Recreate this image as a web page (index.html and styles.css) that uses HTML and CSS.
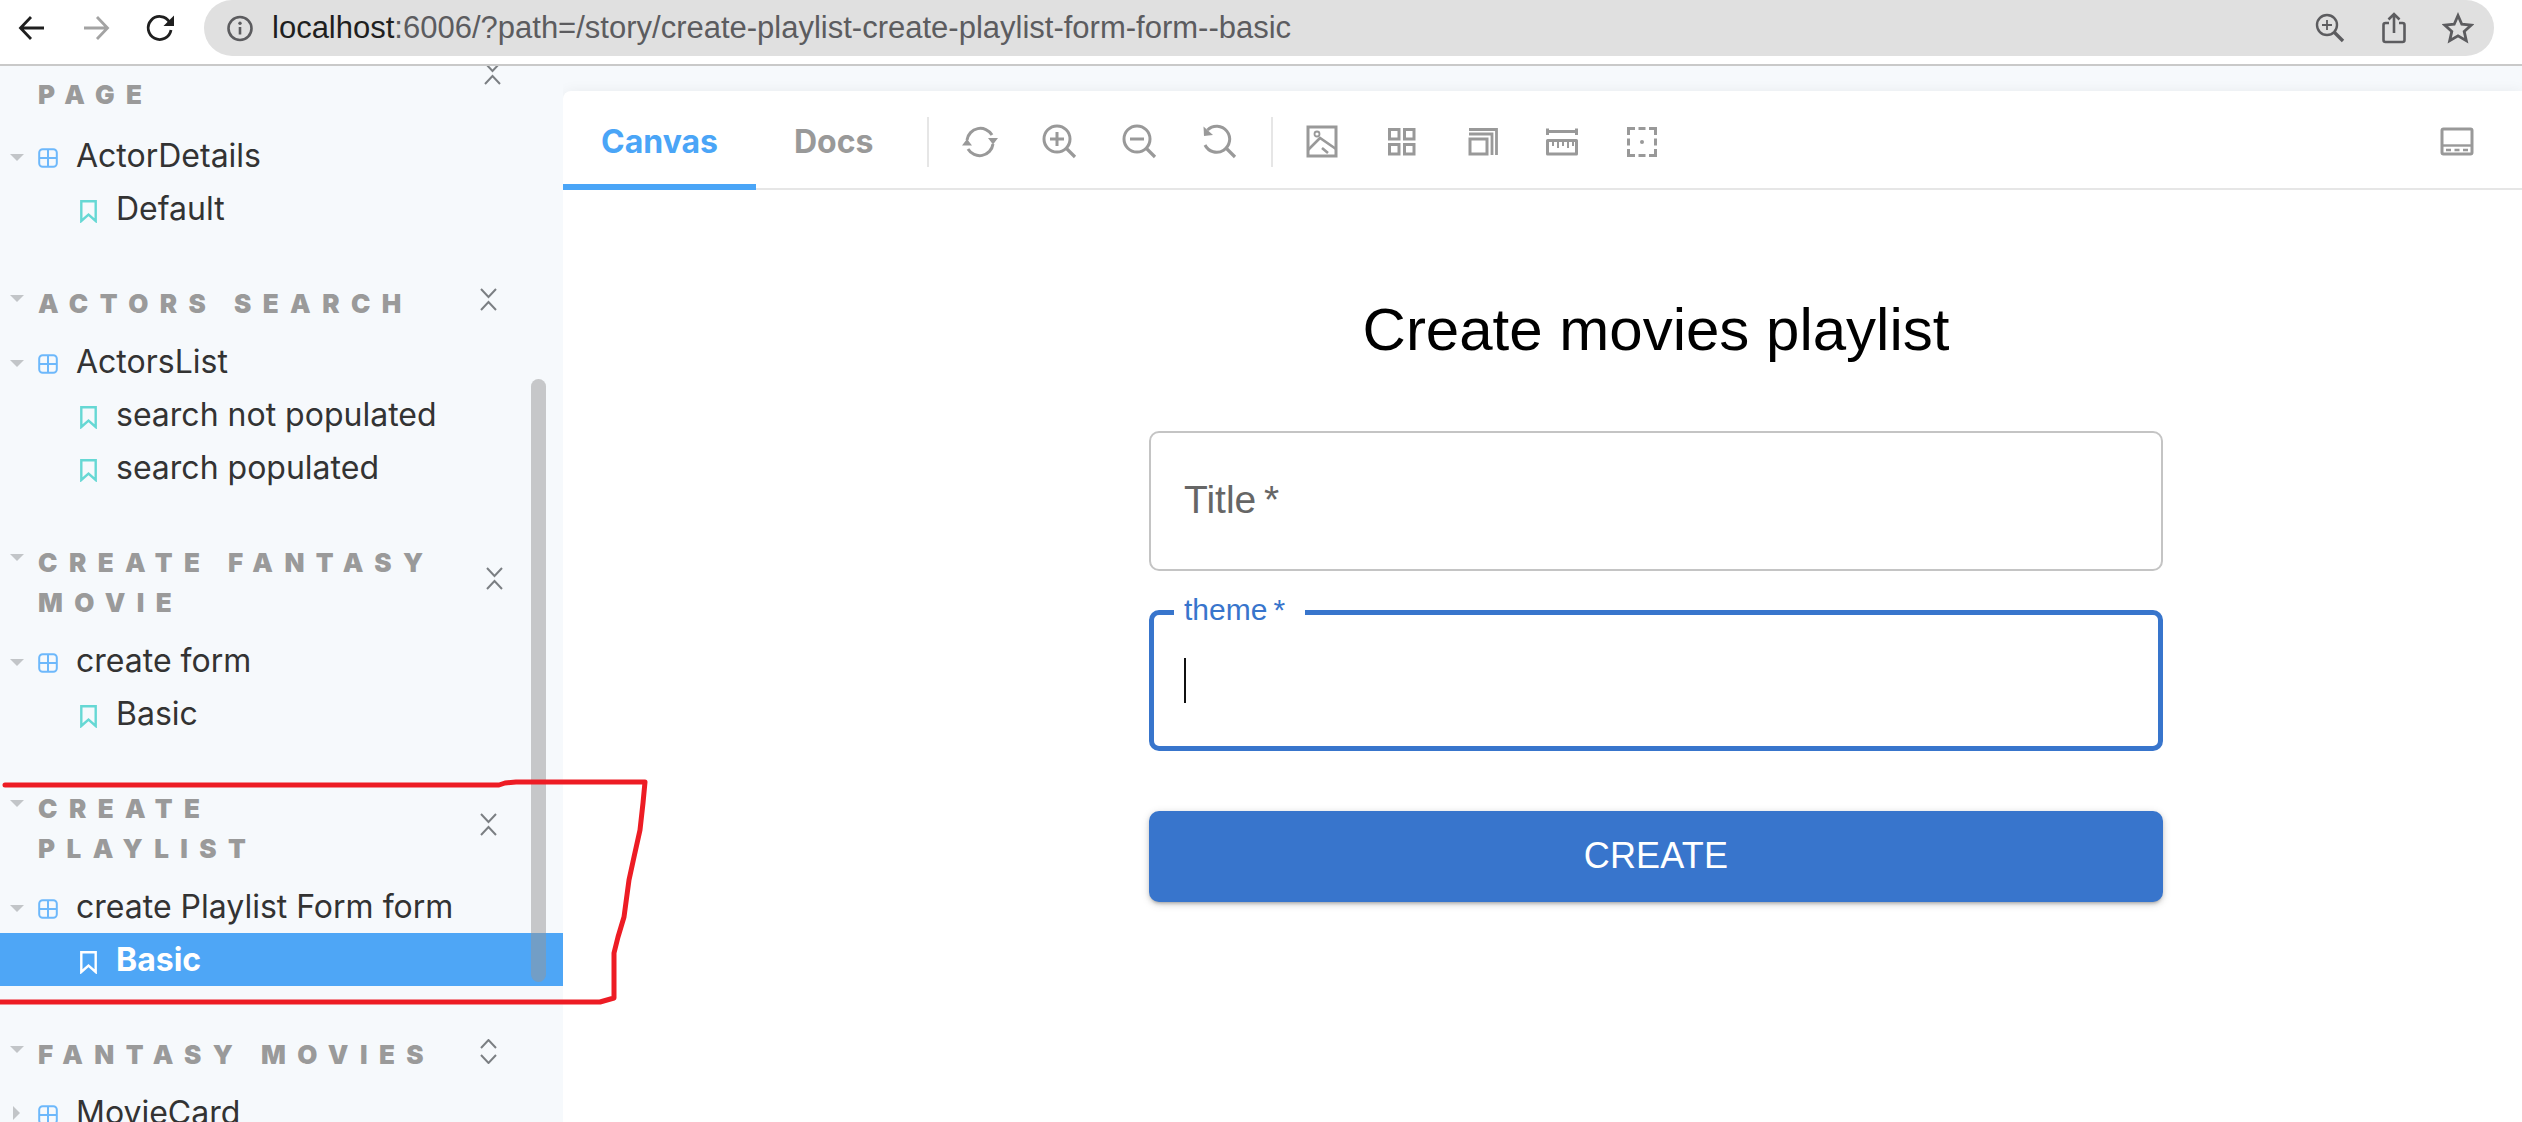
FILE: index.html
```html
<!DOCTYPE html>
<html lang="en">
<head>
<meta charset="utf-8">
<title>Storybook</title>
<link rel="stylesheet" href="styles.css">
</head>
<body>
<svg class="defs" aria-hidden="true">
  <symbol id="comp" viewBox="0 0 20 20"><rect x="1.2" y="1.2" width="17.6" height="17.6" rx="3.5" fill="none" stroke="currentColor" stroke-width="2"/><path d="M10 1.2V18.8M1.2 10H18.8" fill="none" stroke="currentColor" stroke-width="2"/></symbol>
  <symbol id="book" viewBox="0 0 17 23"><path d="M1.3 1.3H15.7V21L8.5 14.5L1.3 21Z" fill="none" stroke="currentColor" stroke-width="2.4"/></symbol>
  <symbol id="collapse" viewBox="0 0 17 23"><path d="M1 1L8.500 9L16 1M1 22L8.500 14L16 22" fill="none" stroke="currentColor" stroke-width="2"/></symbol>
  <symbol id="expand" viewBox="0 0 17 25"><path d="M1 9L8.500 1L16 9M1 16L8.500 24L16 16" fill="none" stroke="currentColor" stroke-width="2"/></symbol>
</svg>
<header class="chrome">
  <div class="nav-btn nav-dark"><svg width="30" height="30" viewBox="0 0 30 30"><path d="M27 15H4M14 4L3.500 15L14 26" fill="none" stroke="currentColor" stroke-width="2.800"/></svg></div>
  <div class="nav-btn nav-off"><svg width="30" height="30" viewBox="0 0 30 30"><path d="M3 15H26M16 4L26.500 15L16 26" fill="none" stroke="currentColor" stroke-width="2.800"/></svg></div>
  <div class="nav-btn nav-dark"><svg width="30" height="30" viewBox="0 0 30 30"><path d="M24.500 9A11.500 11.500 0 1 0 26 17" fill="none" stroke="currentColor" stroke-width="2.800"/><path d="M29 2.500V13H18.500Z" fill="currentColor"/></svg></div>
  <div class="omnibox">
    <svg class="info" width="26" height="27" viewBox="0 0 26 26"><circle cx="13" cy="13" r="11.500" fill="none" stroke="currentColor" stroke-width="2.600"/><path d="M13 11.500V19" stroke="currentColor" stroke-width="2.600"/><circle cx="13" cy="7.800" r="1.700" fill="currentColor"/></svg>
    <div class="url"><span class="host">localhost</span>:6006/?path=/story/create-playlist-create-playlist-form-form--basic</div>
    <div class="omni-btn"><svg width="30" height="30" viewBox="0 0 30 30"><circle cx="12" cy="12" r="10" fill="none" stroke="currentColor" stroke-width="2.400"/><path d="M19.500 19.500L28 28" stroke="currentColor" stroke-width="3.400"/><path d="M12 7V17M7 12H17" stroke="currentColor" stroke-width="1.800"/></svg></div>
    <div class="omni-btn"><svg width="26" height="32" viewBox="0 0 26 32"><path d="M8 11H4.500Q2.500 11 2.500 13V28Q2.500 30 4.500 30H21.500Q23.500 30 23.500 28V13Q23.500 11 21.500 11H18" fill="none" stroke="currentColor" stroke-width="2.600"/><path d="M13 21V2.500M7.500 7.500L13 2L18.500 7.500" fill="none" stroke="currentColor" stroke-width="2.600"/></svg></div>
    <div class="omni-btn"><svg width="32" height="32" viewBox="0 0 32 32"><path d="M16 3.500L19.800 12.200L29.300 13.100L22.200 19.400L24.300 28.700L16 23.800L7.700 28.700L9.800 19.400L2.700 13.100L12.200 12.200Z" fill="none" stroke="currentColor" stroke-width="2.800" stroke-linejoin="miter"/></svg></div>
  </div>
</header>
<div class="app">
  <aside class="sidebar">
    <section class="group group-first">
      <div class="group-head"><span class="caret"></span><h2 class="group-title">Actor Details<br>Page</h2><svg class="tog tog-b"><use href="#collapse"/></svg></div>
      <div class="row"><span class="caret caret-row"></span><svg class="ico-comp"><use href="#comp"/></svg><span>ActorDetails</span></div>
      <div class="row row-story"><svg class="ico-book"><use href="#book"/></svg><span>Default</span></div>
    </section>
    <section class="group">
      <div class="group-head"><span class="caret"></span><h2 class="group-title">Actors Search</h2><svg class="tog"><use href="#collapse"/></svg></div>
      <div class="row"><span class="caret caret-row"></span><svg class="ico-comp"><use href="#comp"/></svg><span>ActorsList</span></div>
      <div class="row row-story"><svg class="ico-book"><use href="#book"/></svg><span>search not populated</span></div>
      <div class="row row-story"><svg class="ico-book"><use href="#book"/></svg><span>search populated</span></div>
    </section>
    <section class="group">
      <div class="group-head"><span class="caret"></span><h2 class="group-title">Create Fantasy<br>Movie</h2><svg class="tog tog-c"><use href="#collapse"/></svg></div>
      <div class="row"><span class="caret caret-row"></span><svg class="ico-comp"><use href="#comp"/></svg><span>create form</span></div>
      <div class="row row-story"><svg class="ico-book"><use href="#book"/></svg><span>Basic</span></div>
    </section>
    <section class="group">
      <div class="group-head"><span class="caret"></span><h2 class="group-title">Create<br>Playlist</h2><svg class="tog"><use href="#collapse"/></svg></div>
      <div class="row"><span class="caret caret-row"></span><svg class="ico-comp"><use href="#comp"/></svg><span>create Playlist Form form</span></div>
      <div class="row row-story row-selected"><svg class="ico-book"><use href="#book"/></svg><span>Basic</span></div>
    </section>
    <section class="group">
      <div class="group-head"><span class="caret"></span><h2 class="group-title">Fantasy Movies</h2><svg class="tog tog-e"><use href="#expand"/></svg></div>
      <div class="row"><span class="caret caret-row caret-closed"></span><svg class="ico-comp"><use href="#comp"/></svg><span>MovieCard</span></div>
    </section>
    <div class="scrollbar"></div>
  </aside>
  <main class="main">
    <div class="panel">
      <nav class="toolbar">
        <div class="tab tab-active">Canvas</div>
        <div class="tab">Docs</div>
        <span class="divider"></span>
        <div class="tool"><svg width="36" height="36" viewBox="0 0 36 36"><path d="M5 16A13.500 13.500 0 0 1 30 11M31 20A13.500 13.500 0 0 1 6 25" fill="none" stroke="currentColor" stroke-width="3"/><path d="M26 14L36 14L31 20.500ZM0 21.500L10 21.500L5 15Z" fill="currentColor"/></svg></div>
        <div class="tool"><svg width="36" height="36" viewBox="0 0 36 36"><circle cx="15" cy="15" r="13" fill="none" stroke="currentColor" stroke-width="3"/><path d="M24.500 24.500L33 33" stroke="currentColor" stroke-width="3.200"/><path d="M15 8V22M8 15H22" stroke="currentColor" stroke-width="3"/></svg></div>
        <div class="tool"><svg width="36" height="36" viewBox="0 0 36 36"><circle cx="15" cy="15" r="13" fill="none" stroke="currentColor" stroke-width="3"/><path d="M24.500 24.500L33 33" stroke="currentColor" stroke-width="3.200"/><path d="M8 15H22" stroke="currentColor" stroke-width="3"/></svg></div>
        <div class="tool"><svg width="36" height="36" viewBox="0 0 36 36"><path d="M5.500 6A13 13 0 1 1 3 21" fill="none" stroke="currentColor" stroke-width="3"/><path d="M24.500 24.500L33 33" stroke="currentColor" stroke-width="3.200"/><path d="M1.500 2.500L2 12L11 11Z" fill="currentColor"/></svg></div>
        <span class="divider divider-b"></span>
        <div class="tool"><svg width="36" height="36" viewBox="0 0 36 36"><rect x="4" y="3" width="28" height="29" fill="none" stroke="currentColor" stroke-width="3"/><circle cx="13" cy="10" r="2.500" fill="none" stroke="currentColor" stroke-width="1.800"/><path d="M4 26L16 14L32 25M18 24L24 29" fill="none" stroke="currentColor" stroke-width="2.600"/></svg></div>
        <div class="tool"><svg width="36" height="36" viewBox="0 0 36 36"><path d="M5.500 5.500H15V15H5.500ZM20.500 5.500H30V15H20.500ZM5.500 20.500H15V30H5.500ZM20.500 20.500H30V30H20.500Z" fill="none" stroke="currentColor" stroke-width="3"/></svg></div>
        <div class="tool"><svg width="36" height="36" viewBox="0 0 36 36"><path d="M6 15H23V30H6Z" fill="none" stroke="currentColor" stroke-width="3"/><path d="M5 10H28V31M5 5.500H32.500V31" fill="none" stroke="currentColor" stroke-width="2.800"/></svg></div>
        <div class="tool"><svg width="36" height="36" viewBox="0 0 36 36"><path d="M3.500 4.500V11M32.500 4.500V11M3.500 7.500H32.500" fill="none" stroke="currentColor" stroke-width="3"/><path d="M3.500 16.500H32.500V30H3.500Z" fill="none" stroke="currentColor" stroke-width="3" stroke-linejoin="round"/><path d="M9 17V22M14 17V24M19 17V22M24 17V24M29 17V22" stroke="currentColor" stroke-width="2"/></svg></div>
        <div class="tool"><svg width="36" height="36" viewBox="0 0 36 36"><path d="M4.500 11V4.500H11M14.500 4.500H21.500M25 4.500H31.500V11M31.500 14.500V21.500M31.500 25V31.500H25M21.500 31.500H14.500M11 31.500H4.500V25M4.500 21.500V14.500" fill="none" stroke="currentColor" stroke-width="3"/><circle cx="18" cy="18" r="2" fill="currentColor"/></svg></div>
        <div class="tool tool-end"><svg width="36" height="36" viewBox="0 0 36 36"><rect x="3" y="5" width="30" height="25" rx="1.500" fill="none" stroke="currentColor" stroke-width="3"/><path d="M3 21.500H33" stroke="currentColor" stroke-width="2.400"/><path d="M7 26H12M15.500 26H20.500M24 26H29" stroke="currentColor" stroke-width="2.400"/></svg></div>
      </nav>
      <div class="canvas">
        <form class="form">
          <h1 class="form-title">Create movies playlist</h1>
          <div class="field field-idle"><span class="field-label">Title&thinsp;*</span></div>
          <div class="field field-focus"><span class="field-legend">theme&thinsp;*</span><span class="text-caret"></span></div>
          <div class="submit">CREATE</div>
        </form>
      </div>
    </div>
  </main>
</div>
<svg class="scribble" width="660" height="240" viewBox="0 0 660 240" aria-hidden="true">
  <path d="M5 23H499L505 21L516 20H645L643 41L640 68L634 95L629 118L624 155L618 175L614 191V236L600 240H0" fill="none" stroke="#ed1c24" stroke-width="5" stroke-linejoin="round" stroke-linecap="round"/>
</svg>
</body>
</html>
```
FILE: styles.css
```css
* { box-sizing: border-box; }
html, body { margin: 0; height: 1122px; overflow: hidden; background: #fff; }
body { font-family: "Inter", "Liberation Sans", sans-serif; position: relative; }
.defs { position: absolute; width: 0; height: 0; }

.chrome { height: 66px; display: flex; align-items: flex-start; background: #fff; border-bottom: 2px solid #c9c9c9; }
.nav-btn { width: 64px; height: 56px; display: flex; align-items: center; justify-content: center; }
.nav-dark { color: #1f1f1f; }
.nav-off { color: #a3a3a3; }
.omnibox { margin-left: 12px; width: 2290px; height: 56px; background: #e0e0e0; border-radius: 28px; display: flex; align-items: center; padding: 0 4px 0 23px; color: #5c5c5f; }
.info { flex: none; }
.url { margin-left: 19px; flex: 1; font-family: "Liberation Sans", sans-serif; font-size: 31px; color: #5c5c5f; white-space: nowrap; }
.host { color: #1f1f1f; }
.omni-btn { width: 64px; height: 56px; display: flex; align-items: center; justify-content: center; }

.app { display: flex; height: 1056px; }
.sidebar { width: 563px; flex: none; background: #f6f9fc; overflow: hidden; position: relative; }
.group { margin-top: 47px; }
.group-first { margin-top: -33px; }
.group-first .group-head { margin-bottom: 16px; }
.group-head { display: flex; align-items: center; position: relative; margin-bottom: 13px; }
.group-title { margin: 0 0 -2px 38px; padding-top: 2px; width: 442px; font-size: 26px; line-height: 40px; font-weight: 900; letter-spacing: 0.44em; text-transform: uppercase; color: #9a9a9a; white-space: nowrap; }
.caret { position: absolute; left: 10px; top: 13px; width: 0; height: 0; border-left: 7px solid transparent; border-right: 7px solid transparent; border-top: 7px solid #c2c5c8; }
.caret-row { top: 25px; }
.caret-closed { left: 13px; top: 20px; border-top: 7px solid transparent; border-bottom: 7px solid transparent; border-left: 7px solid #c2c5c8; border-right: 0; }
.tog { width: 17px; height: 23px; color: #7b7f83; flex: none; margin-bottom: 5px; }
.tog-b { margin-left: 4px; margin-bottom: 0; }
.tog-c { margin-left: 6px; }
.tog-e { height: 25px; margin-bottom: 3px; }
.row { height: 53px; display: flex; align-items: center; padding-left: 38px; position: relative; font-size: 32px; color: #333; white-space: nowrap; }
.ico-comp { width: 20px; height: 20px; color: #6db8fb; margin-right: 18px; margin-top: 4px; flex: none; }
.row-story { padding-left: 80px; }
.ico-book { width: 17px; height: 23px; color: #66d8d4; margin-right: 19px; margin-top: 6px; flex: none; }
.row-selected { background: #4ea6f6; color: #fff; font-weight: 700; }
.row-selected .ico-book { color: #fff; }
.scrollbar { position: absolute; left: 531px; top: 313px; width: 15px; height: 603px; border-radius: 8px; background: rgba(150, 150, 150, 0.5); }

.main { flex: 1; min-width: 0; padding-top: 25px; background: linear-gradient(#f6f9fc 80%, #f0f3f6); }
.panel { height: 100%; background: #fff; border-radius: 8px 0 0 0; box-shadow: 0 0 14px rgba(0, 0, 0, 0.06); }
.toolbar { height: 99px; display: flex; align-items: center; border-bottom: 2px solid #e6e6e6; color: #999; }
.tab { align-self: stretch; margin-bottom: -2px; padding: 8px 38px 0; display: flex; align-items: center; font-size: 32px; font-weight: 700; color: #999; border-bottom: 6px solid transparent; }
.tab-active { color: #4aa5f7; border-bottom-color: #4aa5f7; }
.divider { width: 2px; height: 50px; margin: 4px 11px 0 16px; background: #e6e6e6; flex: none; }
.divider-b { margin: 4px 9px 0 11px; }
.tool { width: 80px; height: 50px; margin-top: 4px; display: flex; align-items: center; justify-content: center; flex: none; }
.tool-end { margin-left: auto; margin-right: 45px; width: 40px; }

.canvas { padding: 105px 0 0 586px; }
.form { width: 1014px; font-family: "Liberation Sans", sans-serif; }
.form-title { margin: 0 0 66px; text-align: center; font-weight: 400; font-size: 60px; line-height: 70px; color: #000; }
.field { display: flex; align-items: center; position: relative; background: #fff; border-radius: 10px; }
.field-idle { height: 140px; border: 2px solid #c4c4c4; padding: 0 0 2px 33px; }
.field-label { font-size: 39px; color: #666; }
.field-focus { height: 141px; margin-top: 39px; border: 5px solid #3875cc; padding-left: 30px; }
.field-legend { position: absolute; left: 20px; top: -22px; width: 131px; padding-left: 10px; background: linear-gradient(#fff 0 0) 0 16px / 100% 12px no-repeat; font-size: 30px; line-height: 34px; color: #3875cc; }
.text-caret { width: 2px; height: 45px; background: #111; }
.submit { margin-top: 60px; height: 91px; padding-bottom: 2px; display: flex; align-items: center; justify-content: center; background: #3875cc; border-radius: 10px; color: #fff; font-size: 36px; letter-spacing: 0.2px; box-shadow: 0 3px 3px -2px rgba(0,0,0,.2), 0 2px 5px rgba(0,0,0,.14), 0 2px 10px rgba(0,0,0,.12); }

.scribble { position: absolute; left: 0; top: 762px; pointer-events: none; overflow: visible; }
```
